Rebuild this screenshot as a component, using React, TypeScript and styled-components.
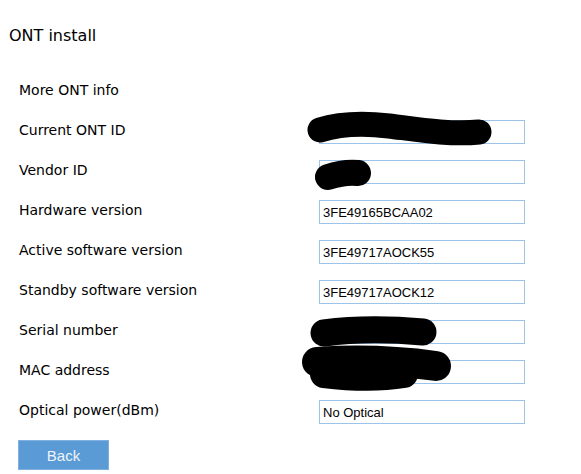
import React from 'react';
import styled, { createGlobalStyle } from 'styled-components';

interface InfoRow {
  label: string;
  value?: string;
  // Thick marker strokes drawn over the field, in the field's own coordinates
  marks?: { d: string; width: number }[];
}

const rows: InfoRow[] = [
  { label: 'More ONT info' },
  {
    label: 'Current ONT ID',
    value: '',
    marks: [{ d: 'M1,10 C20,4 45,3 70,6 S130,15 160,12', width: 25 }],
  },
  {
    label: 'Vendor ID',
    value: '',
    marks: [{ d: 'M9,17 C18,14 30,12 39,13', width: 26 }],
  },
  { label: 'Hardware version', value: '3FE49165BCAA02' },
  { label: 'Active software version', value: '3FE49717AOCK55' },
  { label: 'Standby software version', value: '3FE49717AOCK12' },
  {
    label: 'Serial number',
    value: '',
    marks: [{ d: 'M5,13 C35,9 70,9 104,12', width: 27 }],
  },
  {
    label: 'MAC address',
    value: '',
    marks: [
      { d: 'M-2,2 C40,-1 80,1 117,6', width: 30 },
      { d: 'M5,14 C30,17 60,18 85,14', width: 28 },
    ],
  },
  { label: 'Optical power(dBm)', value: 'No Optical' },
];

const OntInfo: React.FC = () => {
  return (
    <Page>
      <Title>ONT install</Title>
      <InfoTable>
        {rows.map((row) => (
          <Row key={row.label}>
            <Label>{row.label}</Label>
            {row.value !== undefined && (
              <Field>
                <ValueInput readOnly value={row.value} />
                {row.marks && (
                  <Redaction width="206" height="24" viewBox="0 0 206 24">
                    {row.marks.map((m, i) => (
                      <path
                        key={i}
                        d={m.d}
                        fill="none"
                        stroke="#000"
                        strokeWidth={m.width}
                        strokeLinecap="round"
                        strokeLinejoin="round"
                      />
                    ))}
                  </Redaction>
                )}
              </Field>
            )}
          </Row>
        ))}
      </InfoTable>
      <BackButton type="button">Back</BackButton>
    </Page>
  );
};

const GlobalStyle = createGlobalStyle`
  html, body {
    margin: 0;
    padding: 0;
    background: #fff;
  }
`;

const Page = styled.div`
  width: 581px;
  height: 474px;
  box-sizing: border-box;
  padding: 26px 0 0 0;
  font-family: 'DejaVu Sans', Verdana, sans-serif;
  color: #000;
  overflow: hidden;
`;

const Title = styled.div`
  padding-left: 9px;
  font-size: 16px;
  line-height: 20px;
  height: 46px;
`;

const InfoTable = styled.div`
  display: flex;
  flex-direction: column;
  padding-left: 19px;
`;

const Row = styled.div`
  display: grid;
  grid-template-columns: 300px 206px;
  align-items: center;
  height: 40px;
`;

const Label = styled.div`
  font-size: 14px;
  line-height: 18px;
  margin-top: -4px;
`;

const Field = styled.div`
  position: relative;
  width: 206px;
  height: 24px;
`;

const ValueInput = styled.input`
  box-sizing: border-box;
  width: 206px;
  height: 24px;
  margin: 0;
  padding: 0 3px;
  border: 1px solid #9cc3e8;
  border-radius: 0;
  outline: none;
  background: #fff;
  font-family: 'Liberation Sans', Arial, sans-serif;
  font-size: 13px;
  color: #000;
`;

const Redaction = styled.svg`
  position: absolute;
  left: 0;
  top: 0;
  overflow: visible;
  pointer-events: none;
`;

const BackButton = styled.button`
  display: block;
  margin: 8px 0 0 18px;
  width: 91px;
  height: 30px;
  border: 1px solid #7fb0e0;
  background: #5b9bd5;
  color: #eef4fb;
  font-family: 'Liberation Sans', Arial, sans-serif;
  font-size: 15px;
  cursor: pointer;
`;

const App: React.FC = () => (
  <>
    <GlobalStyle />
    <OntInfo />
  </>
);

export default App;
